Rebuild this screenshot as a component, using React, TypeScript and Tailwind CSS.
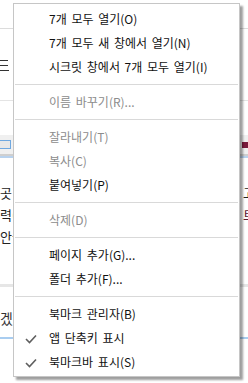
import React from "react";

type Item = { t: string; disabled?: boolean; check?: boolean } | "sep";

const items: Item[] = [
  { t: "7개 모두 열기(O)" },
  { t: "7개 모두 새 창에서 열기(N)" },
  { t: "시크릿 창에서 7개 모두 열기(I)" },
  "sep",
  { t: "이름 바꾸기(R)...", disabled: true },
  "sep",
  { t: "잘라내기(T)", disabled: true },
  { t: "복사(C)", disabled: true },
  { t: "붙여넣기(P)" },
  "sep",
  { t: "삭제(D)", disabled: true },
  "sep",
  { t: "페이지 추가(G)..." },
  { t: "폴더 추가(F)..." },
  "sep",
  { t: "북마크 관리자(B)" },
  { t: "앱 단축키 표시", check: true },
  { t: "북마크바 표시(S)", check: true },
];

function Check() {
  return (
    <svg width="12" height="10" viewBox="0 0 12 10" className="absolute left-[11px] top-[8px]">
      <path d="M1 5 L4.5 8.5 L11 1.5" fill="none" stroke="#5f5f5f" strokeWidth="1.6" />
    </svg>
  );
}

export default function App() {
  const font = { fontFamily: '"Noto Sans CJK KR", "Noto Sans", sans-serif' };
  return (
    <div className="relative w-[248px] h-[383px] overflow-hidden bg-white" style={font}>
      {/* background page */}
      <div className="flex flex-col">
        <div className="h-[28px]" />
        <div className="h-[1px] bg-[#dcdcdc]" />
        <div className="h-[71px] flex flex-col pt-[31px] gap-[4px] pl-0">
          <div className="w-[8px] h-[1px] bg-[#333]" />
          <div className="w-[8px] h-[1px] bg-[#333]" />
          <div className="w-[9px] h-[1px] bg-[#333]" />
        </div>
        <div className="h-[1px] bg-[#e4e4e4]" />
        <div className="h-[34px]" />
        <div className="h-[19px] bg-[#f0f0f0] flex items-center justify-between">
          <div className="w-[12px] h-[9px] border border-[#6fa8e0] bg-[#e8e8e8] -ml-[1px]" />
          <div className="w-[6px] h-[6px] bg-[#7a1a3c]" />
        </div>
        <div className="h-[2px] bg-[#cfcfcf]" />
        <div className="h-[2px] bg-[#b8d2ee]" />
        <div className="h-[24px]" />
        <div className="flex flex-col text-[13px] leading-[22px] text-[#222]">
          <div className="flex justify-between"><span>곳</span><span className="-mr-[7px]">고</span></div>
          <div className="flex justify-between"><span>력(</span><span className="-mr-[7px] text-[#5a1a30]">트</span></div>
          <div className="flex justify-between"><span>안들</span><span /></div>
        </div>
        <div className="h-[36px]" />
        <div className="h-[3px] bg-[#e6e6e6]" />
        <div className="h-[20px]" />
        <div className="text-[14px] leading-[22px] text-[#333]">겠</div>
        <div className="h-[8px]" />
        <div className="h-[2px] bg-[#a9cdf0]" />
      </div>

      {/* context menu */}
      <div className="absolute left-[13px] top-[3px] w-[227px] bg-white border border-[#c6c6c6] pt-[3px] pb-[2px] shadow-[3px_3px_2px_rgba(0,0,0,0.38)]">
        {items.map((it, i) =>
          it === "sep" ? (
            <div key={i} className="h-[11px] flex items-center px-[1px]">
              <div className="h-[1px] w-full bg-[#d9d9d9]" />
            </div>
          ) : (
            <div
              key={i}
              className={`relative h-[24px] flex items-center pl-[35px] text-[12px] [word-spacing:2px] ${
                it.disabled ? "text-[#8c8c8c]" : "text-[#111]"
              }`}
            >
              {it.check && <Check />}
              {it.t}
            </div>
          )
        )}
      </div>
    </div>
  );
}
